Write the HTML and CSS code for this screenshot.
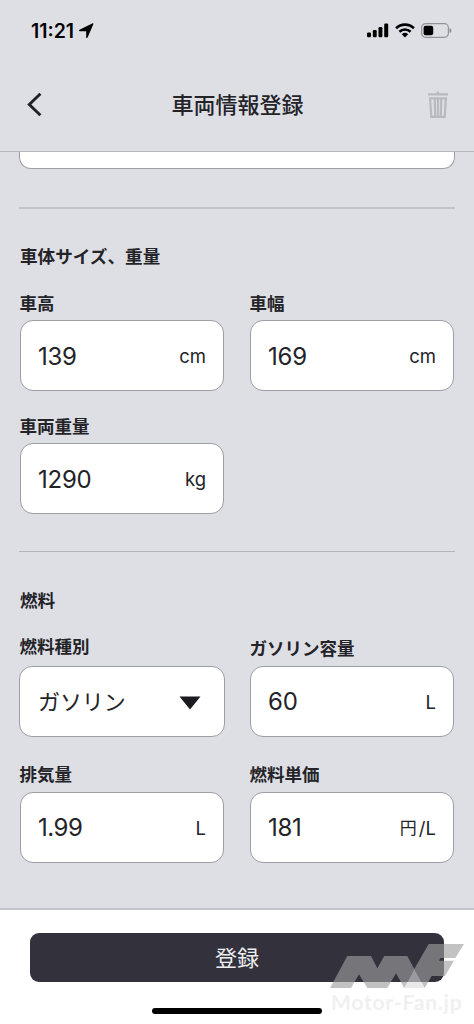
FILE: index.html
```html
<!DOCTYPE html>
<html lang="ja">
<head>
<meta charset="utf-8">
<meta name="viewport" content="width=device-width">
<title>車両情報登録</title>
<link rel="stylesheet" href="styles.css">
</head>
<body>
<div class="app">
  <header class="header">
    <div class="status">
      <div class="clock"><span>11:21</span>
        <svg width="16" height="16" viewBox="0 0 16 16"><path d="M15.300 1.300 9.600 14.600c-.3.700-1.400.6-1.400-.2V8.300H1.900C.9 8.300.7 7.200 1.500 6.800L14.200.5c.8-.4 1.400 0 1.100.8z"/></svg>
      </div>
      <div class="indicators">
        <svg width="22" height="15" viewBox="0 0 22 15"><rect x="0" y="9.500" width="4" height="4.800" rx="1.200"/><rect x="5.800" y="7" width="3.900" height="7.300" rx="1.200"/><rect x="11.500" y="4" width="3.900" height="10.300" rx="1.200"/><rect x="17.200" y=".5" width="4" height="13.800" rx="1.200"/></svg>
        <svg width="20" height="15" viewBox="0 0 20 15"><g fill="none" stroke="#000" stroke-width="2.600"><path d="M1.100 5.200a12.800 12.800 0 0 1 17.800 0"/><path d="M4.400 8.800a8 8 0 0 1 11.200 0"/></g><path d="M6.800 11.300a4.800 4.800 0 0 1 6.400 0L10 14.600z"/></svg>
        <svg width="31" height="15" viewBox="0 0 31 15"><rect x=".6" y=".7" width="26.800" height="13.600" rx="4" fill="none" stroke="#929398" stroke-width="1.200"/><rect x="2.600" y="2.700" width="9.600" height="9.600" rx="2"/><path d="M28.700 5.200c2 .7 2 3.900 0 4.600z" fill="#77787d"/></svg>
      </div>
    </div>
    <div class="titlebar">
      <svg class="back" width="16" height="26" viewBox="0 0 16 26"><path d="M14.400 1.700 3.300 12.500l11.100 10.800"/></svg>
      <h1>車両情報登録</h1>
      <svg class="trash" width="22" height="28" viewBox="0 0 22 28"><path d="M1 3.300h20M10.900.500v3M2 7.300h18M3 6.500l1.300 19.300h13.400L19 6.500M7.700 7.500l.5 18M11 7.500v18M14.300 7.500l-.5 18"/></svg>
    </div>
  </header>
  <main class="content">
    <div class="previous"></div>
    <section class="section size">
      <h2>車体サイズ、重量</h2>
      <div class="fields">
        <div class="field"><label>車高</label><div class="box"><span>139</span><small>cm</small></div></div>
        <div class="field"><label>車幅</label><div class="box"><span>169</span><small>cm</small></div></div>
        <div class="field"><label>車両重量</label><div class="box"><span>1290</span><small>kg</small></div></div>
      </div>
    </section>
    <section class="section fuel">
      <h2>燃料</h2>
      <div class="fields">
        <div class="field"><label>燃料種別</label><div class="box select"><span>ガソリン</span><svg width="22" height="14" viewBox="0 0 22 14"><path d="M.5.500h21L11 13.500z"/></svg></div></div>
        <div class="field lowered"><label>ガソリン容量</label><div class="box"><span>60</span><small>L</small></div></div>
        <div class="field lowered"><label>排気量</label><div class="box"><span class="decimal">1.99</span><small>L</small></div></div>
        <div class="field lowered"><label>燃料単価</label><div class="box"><span>181</span><small class="price"><span class="yen">円</span>/L</small></div></div>
      </div>
    </section>
  </main>
  <footer class="footer">
    <div class="submit">登録</div>
    <div class="home"></div>
    <div class="watermark">
      <svg width="136" height="46" viewBox="0 0 136 46">
        <path class="mark" d="M1 45 18.300 13H42l6.300 12.300L55.300 13h23l7 13L99.700 1H135l-8.700 14H111.500l-1.500 2.700h15L116 33h-13.300l-7 12L85.300 26 75.300 45 67 30.300 58.300 45h-20L30 31.300 22 45z"/>
        <path class="light" d="M85.300 26 75.300 45h20.400z"/>
      </svg>
      <p>Motor-Fan.jp</p>
    </div>
  </footer>
</div>
</body>
</html>
```
FILE: styles.css
```css
* { box-sizing: border-box; }
body {
  margin: 0;
  background: #dedfe4;
  color: #232328;
  font-family: Inter, "Noto Sans CJK JP", sans-serif;
}
svg { display: block; }
h1, h2, p { margin: 0; }
.app { width: 474px; height: 1024px; display: flex; flex-direction: column; overflow: hidden; }
.header { height: 152px; flex: none; border-bottom: 1px solid #b5b6bb; }
.status {
  height: 60px;
  padding: 1px 22px 0 31px;
  display: flex;
  align-items: center;
  justify-content: space-between;
  color: #000;
}
.clock { display: flex; align-items: center; gap: 4px; font-size: 19.500px; font-weight: 600; }
.indicators { display: flex; align-items: center; gap: 6px; }
.titlebar {
  height: 88px;
  padding: 1px 25px 0 26px;
  display: grid;
  grid-template-columns: 22px 1fr 22px;
  align-items: center;
}
.titlebar h1 { font-size: 22px; line-height: 32px; font-weight: 500; text-align: center; }
.back { fill: none; stroke: #202025; stroke-width: 2.900; }
.trash { fill: none; stroke: #b9babf; stroke-width: 2.200; }
.content { flex: 1; padding: 0 20px; }
.previous {
  height: 17px;
  margin: 0 -1px;
  background: #fff;
  border: 1px solid #9d9da4;
  border-top: 0;
  border-radius: 0 0 12px 12px;
}
.section { margin: 0 -1px; padding: 35px 1px 0; border-top: 1px solid #b4b5bb; }
.size { margin-top: 38px; height: 344px; border-top: 2px solid #c3c4ca; }
h2 { font-size: 17.600px; line-height: 26px; font-weight: 700; }
.fuel h2 { padding-top: 1px; height: 26px; }
.fields { display: grid; grid-template-columns: 204px 204px; column-gap: 26px; row-gap: 21px; margin-top: 19px; }
.field label { display: block; height: 31px; font-size: 17.500px; line-height: 30px; font-weight: 700; margin-left: -.5px; }
.fuel .field label { height: 34px; }
.fuel .lowered label { padding-top: 1.500px; }
.box {
  height: 71px;
  padding: 1px 17px 0;
  display: flex;
  align-items: center;
  justify-content: space-between;
  background: #fff;
  border: 1px solid #9d9da4;
  border-radius: 13px;
  font-size: 24px;
}
.fuel .box { padding-top: 0; }
.box > span { letter-spacing: -.25px; }
.box > .decimal { letter-spacing: -.5px; }
.box small { font-size: 18.500px; }
.box .price { display: flex; align-items: center; gap: 2px; }
.yen { font-size: 17px; font-weight: 400; line-height: 22px; }
.fuel .select { margin: 0 -1px; padding: 0 23px 0 18px; }
.select > span { font-size: 22px; letter-spacing: -.1px; padding-bottom: 3px; }
.select svg { fill: #1c1b20; margin-top: 3px; }
.footer {
  position: relative;
  flex: none;
  height: 116px;
  padding: 23px 30px 0;
  background: #fff;
  border-top: 2px solid #c4c5cc;
}
.submit {
  height: 49px;
  padding-bottom: 4px;
  border-radius: 9px;
  background: #33313c;
  color: #ededf0;
  display: flex;
  align-items: center;
  justify-content: center;
  font-size: 22px;
}
.home { width: 170px; height: 6px; margin: 26px auto 0; border-radius: 3px; background: #000; }
.watermark { position: absolute; left: 329px; top: 33px; width: 136px; }
.mark { fill: rgba(158, 158, 158, .63); }
.light { fill: rgba(220, 220, 224, .62); }
.watermark p {
  width: max-content;
  margin-left: 2px;
  color: #f0f0f1;
  font: 700 21px/26px Lato, sans-serif;
  letter-spacing: .8px;
}
```
